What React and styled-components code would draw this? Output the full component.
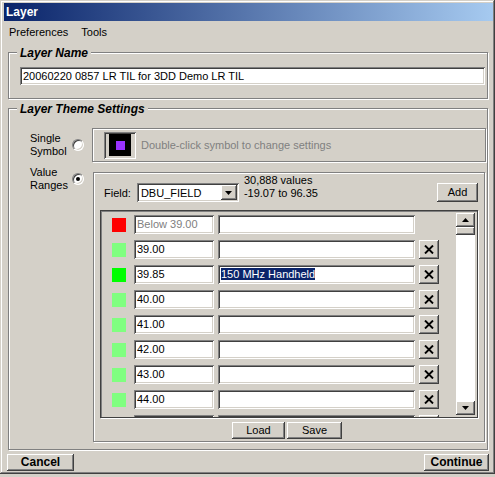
import React from 'react';
import styled, { createGlobalStyle } from 'styled-components';

const GlobalStyle = createGlobalStyle`
  html, body { margin: 0; padding: 0; background: #d4d0c8; }
  body { font-family: "Liberation Sans", Arial, sans-serif; font-size: 11px; color: #000; }
  * { box-sizing: border-box; }
`;

const raised = `
  background: #d4d0c8;
  box-shadow: inset -1px -1px #404040, inset 1px 1px #fff, inset -2px -2px #808080, inset 2px 2px #d4d0c8;
`;
const sunken = `
  box-shadow: inset 1px 1px #808080, inset -1px -1px #fff, inset 2px 2px #404040, inset -2px -2px #d4d0c8;
`;
const etched = `
  border: 1px solid #808080;
  box-shadow: inset 1px 1px #fff, 1px 1px #fff;
`;

const Window = styled.div`
  width: 495px;
  height: 474px;
  padding: 3px 2px 0 4px;
  display: flex;
  flex-direction: column;
  box-shadow: inset -1px -1px #404040, inset 1px 1px #d4d0c8, inset -2px -2px #808080, inset 2px 2px #fff;
`;

const TitleBar = styled.div`
  height: 18px;
  padding: 1px 2px 0;
  line-height: 17px;
  font-size: 12px;
  font-weight: bold;
  color: #fff;
  background: linear-gradient(90deg, #0a246a, #a6caf0);
`;

const MenuBar = styled.div`
  display: flex;
  height: 23px;
  padding-top: 5px;
  line-height: 13px;
`;

const MenuItem = styled.span`
  padding: 0 5px;
  margin-right: 3px;
`;

const Group = styled.div`
  position: relative;
  ${etched}
  margin: ${p => p.$top}px 5px 0 4px;
  height: ${p => p.$height}px;
  padding: ${p => p.$pad};
`;

const Legend = styled.span`
  position: absolute;
  top: -7px;
  left: 8px;
  padding: 0 3px;
  background: #d4d0c8;
  font-size: 12px;
  font-weight: bold;
  font-style: italic;
  line-height: 14px;
`;

const TextBox = styled.div`
  ${sunken}
  background: #fff;
  height: ${p => p.$h || 19}px;
  width: ${p => (p.$w ? `${p.$w}px` : 'auto')};
  flex: ${p => (p.$w ? 'none' : '1')};
  padding: 1px 3px 0;
  line-height: ${p => (p.$h || 19) - 2}px;
  white-space: nowrap;
  overflow: hidden;
  color: ${p => (p.$disabled ? '#808080' : '#000')};
`;

const Selected = styled.span`
  background: #0a246a;
  color: #fff;
`;

const ThemeGrid = styled.div`
  display: grid;
  grid-template-columns: 42px 20px 1fr;
  row-gap: 10px;
`;

const OptionLabel = styled.div`
  line-height: 13px;
  align-self: ${p => (p.$top ? 'start' : 'center')};
  margin-top: ${p => (p.$top ? '-6px' : '0')};
`;

const Radio = styled.span`
  position: relative;
  width: 12px;
  height: 12px;
  border-radius: 50%;
  background: #fff;
  border: 1px solid;
  border-color: #808080 #fff #fff #808080;
  box-shadow: inset 1px 1px #404040, inset -1px -1px #d4d0c8;
  align-self: ${p => (p.$top ? 'start' : 'center')};
  margin-top: ${p => (p.$top ? '1px' : '0')};
  &::after {
    content: '';
    display: ${p => (p.$checked ? 'block' : 'none')};
    position: absolute;
    left: 3px;
    top: 3px;
    width: 4px;
    height: 4px;
    border-radius: 50%;
    background: #000;
  }
`;

const SymbolPanel = styled.div`
  ${etched}
  height: 34px;
  display: flex;
  align-items: center;
  gap: 5px;
  padding-left: 11px;
`;

const Swatch = styled.div`
  width: 32px;
  height: 27px;
  display: flex;
  align-items: center;
  justify-content: center;
  background: #d4d0c8;
  box-shadow: inset 1px 1px #808080, inset -1px -1px #fff, inset 2px 2px #404040;
`;

const SymbolSquare = styled.div`
  width: 22px;
  height: 22px;
  background: #000;
  display: flex;
  align-items: center;
  justify-content: center;
`;

const SymbolDot = styled.div`
  width: 9px;
  height: 9px;
  background: #9932ff;
`;

const DisabledText = styled.span`
  color: #808080;
`;

const RangesPanel = styled.div`
  ${etched}
  height: 270px;
  margin: 0 1px;
  padding: 10px 6px 2px;
  display: flex;
  flex-direction: column;
`;

const Header = styled.div`
  display: flex;
  align-items: center;
  height: 19px;
`;

const FieldLabel = styled.span`
  margin: 0 6px 0 4px;
`;

const Select = styled.div`
  ${sunken}
  background: #fff;
  width: 102px;
  height: 19px;
  display: flex;
  align-items: center;
  padding: 2px 2px 2px 4px;
`;

const SelectText = styled.span`
  flex: 1;
  padding-top: 1px;
`;

const ArrowButton = styled.div`
  ${raised}
  width: ${p => p.$w}px;
  height: ${p => p.$h}px;
  display: flex;
  align-items: center;
  justify-content: center;
`;

const Stats = styled.div`
  align-self: flex-start;
  margin: -9px 0 0 5px;
  line-height: 13px;
`;

const Button = styled.div`
  ${raised}
  width: ${p => p.$w}px;
  height: ${p => p.$h || 17}px;
  line-height: ${p => p.$h || 17}px;
  text-align: center;
  font-size: ${p => (p.$bold ? '12px' : '11px')};
  font-weight: ${p => (p.$bold ? 'bold' : 'normal')};
  margin-left: ${p => (p.$push ? 'auto' : '0')};
`;

const ListBox = styled.div`
  margin-top: 8px;
  height: 208px;
  display: flex;
  overflow: hidden;
  border: 1px solid #404040;
  box-shadow: inset 1px 1px #808080, 1px 1px #fff;
`;

const Rows = styled.div`
  flex: 1;
  padding: 4px 0 0 11px;
  overflow: hidden;
`;

const Row = styled.div`
  display: flex;
  align-items: center;
  height: 19px;
  margin-bottom: 6px;
  gap: 4px;
`;

const Color = styled.div`
  width: 14px;
  height: 14px;
  background: ${p => p.$color};
  margin-right: 4px;
`;

const XButton = styled.div`
  ${raised}
  width: 20px;
  height: 19px;
  display: flex;
  align-items: center;
  justify-content: center;
`;

const ScrollBar = styled.div`
  width: 19px;
  margin: 2px 2px 2px 0;
  display: flex;
  flex-direction: column;
  background: #fff;
`;

const Thumb = styled.div`
  ${raised}
  height: 8px;
`;

const Track = styled.div`
  flex: 1;
`;

const PanelFooter = styled.div`
  display: flex;
  justify-content: center;
  gap: 2px;
  margin: 4px 4px 0 0;
`;

const Footer = styled.div`
  display: flex;
  justify-content: space-between;
  margin-top: 4px;
  padding: 0 4px 0 3px;
`;

const Tri = ({ up }) => (
  <svg width="7" height="4" viewBox="0 0 7 4">
    <polygon points={up ? '3.5,0 7,4 0,4' : '0,0 7,0 3.5,4'} fill="#000" />
  </svg>
);

const XIcon = () => (
  <svg width="10" height="9" viewBox="0 0 10 9">
    <path d="M1 0.5 L9 8.5 M9 0.5 L1 8.5" stroke="#000" strokeWidth="1.9" fill="none" />
  </svg>
);

const rows = [
  { color: '#ff0000', value: 'Below 39.00', disabled: true },
  { color: '#80ff80', value: '39.00' },
  { color: '#00ff00', value: '39.85', label: '150 MHz Handheld' },
  { color: '#80ff80', value: '40.00' },
  { color: '#80ff80', value: '41.00' },
  { color: '#80ff80', value: '42.00' },
  { color: '#80ff80', value: '43.00' },
  { color: '#80ff80', value: '44.00' },
  { color: '#80ff80', value: '' },
];

export default function App() {
  return (
    <>
      <GlobalStyle />
      <Window>
        <TitleBar>Layer</TitleBar>
        <MenuBar>
          <MenuItem>Preferences</MenuItem>
          <MenuItem>Tools</MenuItem>
        </MenuBar>

        <Group $top={8} $height={47} $pad="14px 2px 0 11px">
          <Legend>Layer Name</Legend>
          <TextBox $h={18}>20060220 0857 LR TIL for 3DD Demo LR TIL</TextBox>
        </Group>

        <Group $top={9} $height={342} $pad="19px 1px 0 21px">
          <Legend>Layer Theme Settings</Legend>
          <ThemeGrid>
            <OptionLabel>Single<br />Symbol</OptionLabel>
            <Radio />
            <SymbolPanel>
              <Swatch>
                <SymbolSquare>
                  <SymbolDot />
                </SymbolSquare>
              </Swatch>
              <DisabledText>Double-click symbol to change settings</DisabledText>
            </SymbolPanel>

            <OptionLabel $top>Value<br />Ranges</OptionLabel>
            <Radio $top $checked />
            <RangesPanel>
              <Header>
                <FieldLabel>Field:</FieldLabel>
                <Select>
                  <SelectText>DBU_FIELD</SelectText>
                  <ArrowButton $w={16} $h={15}><Tri /></ArrowButton>
                </Select>
                <Stats>30,888 values<br />-19.07 to 96.35</Stats>
                <Button $w={41} $h={19} $push>Add</Button>
              </Header>
              <ListBox>
                <Rows>
                  {rows.map((r, i) => (
                    <Row key={i}>
                      <Color $color={r.color} />
                      <TextBox $w={80} $disabled={r.disabled}>{r.value}</TextBox>
                      <TextBox $w={197}>{r.label ? <Selected>{r.label}</Selected> : ''}</TextBox>
                      {!r.disabled && <XButton><XIcon /></XButton>}
                    </Row>
                  ))}
                </Rows>
                <ScrollBar>
                  <ArrowButton $w={19} $h={14}><Tri up /></ArrowButton>
                  <Thumb />
                  <Track />
                  <ArrowButton $w={19} $h={14}><Tri /></ArrowButton>
                </ScrollBar>
              </ListBox>
              <PanelFooter>
                <Button $w={53}>Load</Button>
                <Button $w={55}>Save</Button>
              </PanelFooter>
            </RangesPanel>
          </ThemeGrid>
        </Group>

        <Footer>
          <Button $w={67} $bold>Cancel</Button>
          <Button $w={65} $bold>Continue</Button>
        </Footer>
      </Window>
    </>
  );
}
